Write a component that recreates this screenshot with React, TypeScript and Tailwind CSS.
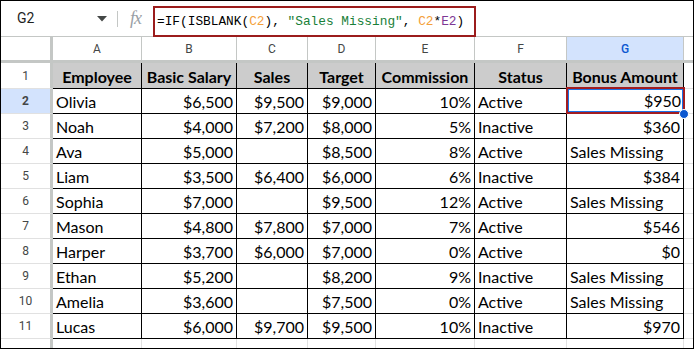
import React from 'react';

type Row = {
  name: string;
  salary: string;
  sales: string;
  target: string;
  commission: string;
  status: string;
  bonus: string;
};

const rows: Row[] = [
  { name: 'Olivia', salary: '$6,500', sales: '$9,500', target: '$9,000', commission: '10%', status: 'Active', bonus: '$950' },
  { name: 'Noah', salary: '$4,000', sales: '$7,200', target: '$8,000', commission: '5%', status: 'Inactive', bonus: '$360' },
  { name: 'Ava', salary: '$5,000', sales: '', target: '$8,500', commission: '8%', status: 'Active', bonus: 'Sales Missing' },
  { name: 'Liam', salary: '$3,500', sales: '$6,400', target: '$6,000', commission: '6%', status: 'Inactive', bonus: '$384' },
  { name: 'Sophia', salary: '$7,000', sales: '', target: '$9,500', commission: '12%', status: 'Active', bonus: 'Sales Missing' },
  { name: 'Mason', salary: '$4,800', sales: '$7,800', target: '$7,000', commission: '7%', status: 'Active', bonus: '$546' },
  { name: 'Harper', salary: '$3,700', sales: '$6,000', target: '$7,000', commission: '0%', status: 'Active', bonus: '$0' },
  { name: 'Ethan', salary: '$5,200', sales: '', target: '$8,200', commission: '9%', status: 'Inactive', bonus: 'Sales Missing' },
  { name: 'Amelia', salary: '$3,600', sales: '', target: '$7,500', commission: '0%', status: 'Active', bonus: 'Sales Missing' },
  { name: 'Lucas', salary: '$6,000', sales: '$9,700', target: '$9,500', commission: '10%', status: 'Inactive', bonus: '$970' },
];

const cols = 'grid grid-cols-[52px_89px_95px_71px_68px_99px_92px_117px_1fr]';
const letters = ['A', 'B', 'C', 'D', 'E', 'F', 'G'];
const headers = ['Employee', 'Basic Salary', 'Sales', 'Target', 'Commission', 'Status', 'Bonus Amount'];

const cellFont = "font-['Lato','Open_Sans',sans-serif] text-[16px] leading-[20px] text-black";

const Cell = ({ children, right }: { children?: React.ReactNode; right?: boolean }) => (
  <div
    className={`h-[25px] flex items-end pb-[1px] px-[3px] border-r border-b border-black whitespace-nowrap overflow-hidden ${
      right ? 'justify-end' : 'justify-start'
    } ${cellFont}`}
  >
    {children}
  </div>
);

const RowHead = ({ n, active }: { n: number | string; active?: boolean }) => (
  <div
    className={`flex items-center justify-center border-r-[3px] border-r-[#c4c7c5] border-b border-b-[#e1e1e1] text-[12px] text-[#444746] font-['Roboto',sans-serif] ${
      active ? 'bg-[#d3e3fd] font-bold text-[#0b57d0]' : 'bg-white'
    }`}
  >
    {n}
  </div>
);

export default function App() {
  return (
    <div className="w-[694px] h-[349px] bg-white border border-black overflow-hidden box-border">
      {/* Formula bar */}
      <div className="h-[36px] flex items-center border-b border-[#c4c7c5] font-['Roboto',sans-serif]">
        <div className="w-[116px] flex items-center pl-[16px] pr-[10px] text-[14px] text-[#1f1f1f]">
          <span className="flex-1">G2</span>
          <svg width="10" height="6" viewBox="0 0 10 6" className="mt-[1px]">
            <path d="M0 0h10L5 5.5z" fill="#444746" />
          </svg>
        </div>
        <div className="w-px h-[16px] bg-[#c4c7c5]" />
        <div className="w-[35px] flex justify-center text-[#9aa0a6] italic font-['Liberation_Serif',serif] text-[18px] tracking-[-1px]">
          fx
        </div>
        <div className="self-end h-[31px] -mb-px w-[323px] border-2 border-[#9b1c1c] flex items-center pl-[2px] relative z-10">
          <div className="font-['Liberation_Mono',monospace] text-[12.8px] text-black whitespace-pre">
            =IF(ISBLANK(<span className="text-[#f4a03a]">C2</span>),{' '}
            <span className="text-[#188038]">"Sales Missing"</span>,{' '}
            <span className="text-[#f4a03a]">C2</span>*<span className="text-[#7e3794]">E2</span>)
          </div>
        </div>
      </div>

      {/* Column letters */}
      <div className={`${cols} h-[26px] border-b-[3px] border-[#c4c7c5] font-['Roboto',sans-serif] text-[12px] text-[#444746]`}>
        <div className="border-r-[3px] border-[#c4c7c5]" />
        {letters.map((l) => (
          <div
            key={l}
            className={`flex items-center justify-center border-r border-[#c4c7c5] ${
              l === 'G' ? 'bg-[#d3e3fd] text-[#0b57d0] font-medium' : ''
            }`}
          >
            {l}
          </div>
        ))}
        <div />
      </div>

      {/* Header row */}
      <div className={`${cols} h-[26px]`}>
        <RowHead n={1} />
        {headers.map((h) => (
          <div
            key={h}
            className={`flex items-end justify-center pb-[1px] bg-[#cccccc] border-r border-b border-black font-bold whitespace-nowrap ${cellFont}`}
          >
            {h}
          </div>
        ))}
        <div className="border-b border-[#e1e1e1]" />
      </div>

      {/* Data rows */}
      {rows.map((r, i) => (
        <div key={r.name} className={`${cols} h-[25px]`}>
          <RowHead n={i + 2} active={i === 0} />
          <Cell>{r.name}</Cell>
          <Cell right>{r.salary}</Cell>
          <Cell right>{r.sales}</Cell>
          <Cell right>{r.target}</Cell>
          <Cell right>{r.commission}</Cell>
          <Cell>{r.status}</Cell>
          {i === 0 ? (
            <div className="relative h-[25px] border-r border-b border-black">
              <div className="absolute -left-[1px] -top-[2px] -right-[2px] -bottom-[1px] border-2 border-[#a11d21] z-10">
                <div className={`h-full w-full border border-[#1a73e8] flex items-end justify-end pr-[1px] ${cellFont}`}>
                  {r.bonus}
                </div>
              </div>
              <div className="absolute -right-[6px] -bottom-[6px] w-[10px] h-[10px] rounded-full bg-[#0b57d0] border border-white z-20" />
            </div>
          ) : (
            <Cell right={r.bonus !== 'Sales Missing'}>{r.bonus}</Cell>
          )}
          <div className="border-b border-[#e1e1e1]" />
        </div>
      ))}

      {/* Row 12 */}
      <div className={`${cols} h-[25px]`}>
        <div className="flex justify-center border-r-[3px] border-[#c4c7c5] text-[12px] text-[#444746] font-['Roboto',sans-serif] pt-[6px]">
          12
        </div>
        {letters.map((l) => (
          <div key={l} className="border-r border-[#e1e1e1]" />
        ))}
        <div />
      </div>
    </div>
  );
}
